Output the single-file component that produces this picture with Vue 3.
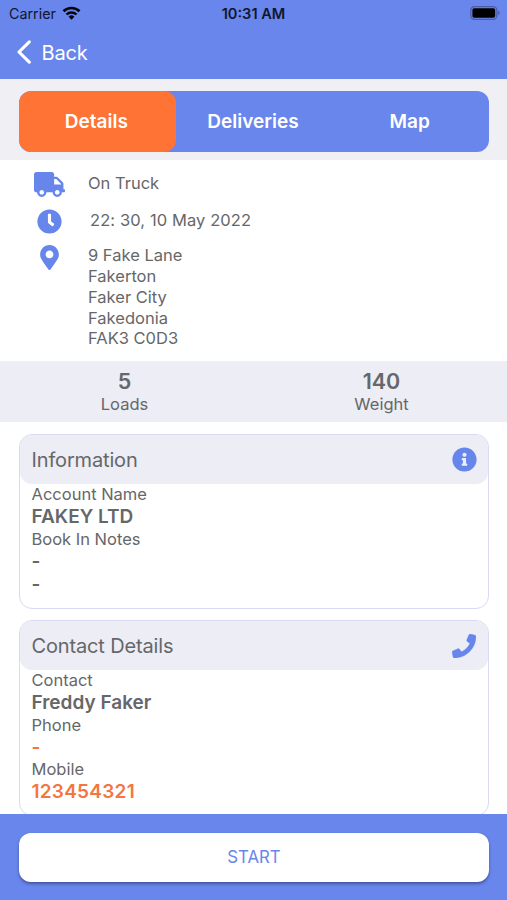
<script setup>
import { ref } from 'vue'

const tabs = ['Details', 'Deliveries', 'Map']
const active = ref('Details')
const address = ['9 Fake Lane', 'Fakerton', 'Faker City', 'Fakedonia', 'FAK3 C0D3']
const stats = [
  { value: '5', label: 'Loads' },
  { value: '140', label: 'Weight' },
]
</script>

<template>
  <div class="screen">
    <header class="header">
      <div class="status">
        <div class="carrier">
          <span>Carrier</span>
          <svg class="wifi" viewBox="0 0 18 14">
            <path d="M1 5.3a11.3 11.3 0 0 1 16 0" fill="none" stroke="#05070f" stroke-width="2.7" />
            <path d="M4 8.5a7.1 7.1 0 0 1 10 0" fill="none" stroke="#05070f" stroke-width="2.4" />
            <path d="M9 13.7l-2.9-3a4.2 4.2 0 0 1 5.8 0z" fill="#05070f" />
          </svg>
        </div>
        <span class="time">10:31 AM</span>
        <div class="power">
          <svg class="battery" viewBox="0 0 31 14">
            <rect x="0.8" y="0.7" width="26" height="12.6" rx="3.6" fill="none" stroke="#4a5ca6" stroke-width="1.2" />
            <rect x="2.4" y="2.3" width="22.8" height="9.4" rx="1.8" fill="#000" />
            <path d="M28.2 4.8c1.9.6 1.9 3.8 0 4.4z" fill="#4a5ca6" />
          </svg>
        </div>
      </div>
      <button class="back">
        <svg class="chevron" viewBox="0 0 14 24"><path d="M12.3 1.8L2 12l10.3 10.2" fill="none" stroke="#fff" stroke-width="3.1" stroke-linecap="round" stroke-linejoin="round" /></svg>
        <span>Back</span>
      </button>
    </header>

    <div class="tab-area">
      <nav class="tabs">
        <button v-for="t in tabs" :key="t" class="tab" :class="{ active: t === active }" @click="active = t">{{ t }}</button>
      </nav>
    </div>

    <section class="summary">
      <div class="line">
        <span class="icon-cell">
          <svg class="truck" viewBox="0 0 640 512"><path d="M624 352h-16V243.9c0-12.7-5.1-24.9-14.1-33.9L494 110.1c-9-9-21.2-14.1-33.9-14.1H416V48c0-26.5-21.5-48-48-48H48C21.5 0 0 21.5 0 48v320c0 26.5 21.5 48 48 48h16c0 53 43 96 96 96s96-43 96-96h128c0 53 43 96 96 96s96-43 96-96h48c8.8 0 16-7.2 16-16v-32c0-8.8-7.2-16-16-16zM160 464c-26.5 0-48-21.5-48-48s21.5-48 48-48 48 21.5 48 48-21.5 48-48 48zm320 0c-26.5 0-48-21.5-48-48s21.5-48 48-48 48 21.5 48 48-21.5 48-48 48zm80-208H416V144h44.1l99.9 99.9V256z" /></svg>
        </span>
        <span class="text">On Truck</span>
      </div>
      <div class="line when">
        <span class="icon-cell">
          <svg class="round" viewBox="0 0 512 512"><path d="M256,8C119,8,8,119,8,256S119,504,256,504,504,393,504,256,393,8,256,8Zm92.49,313h0l-20,25a16,16,0,0,1-22.49,2.5h0l-67-49.72a40,40,0,0,1-15-31.23V112a16,16,0,0,1,16-16h32a16,16,0,0,1,16,16V256l58,42.5A16,16,0,0,1,348.49,321Z" /></svg>
        </span>
        <span class="text">22: 30, 10 May 2022</span>
      </div>
      <div class="line place">
        <span class="icon-cell">
          <svg class="pin" viewBox="0 0 384 512"><path d="M172.268 501.67C26.97 291.031 0 269.413 0 192 0 85.961 85.961 0 192 0s192 85.961 192 192c0 77.413-26.97 99.031-172.268 309.67-9.535 13.774-29.93 13.773-39.464 0zM192 272c44.183 0 80-35.817 80-80s-35.817-80-80-80-80 35.817-80 80 35.817 80 80 80z" /></svg>
        </span>
        <div class="address">
          <div v-for="a in address" :key="a">{{ a }}</div>
        </div>
      </div>
    </section>

    <section class="stats">
      <div v-for="s in stats" :key="s.label" class="stat">
        <strong>{{ s.value }}</strong>
        <span>{{ s.label }}</span>
      </div>
    </section>

    <main class="cards">
      <article class="card info">
        <div class="card-head">
          <h2>Information</h2>
          <svg class="round" viewBox="0 0 512 512"><path d="M256 8C119.043 8 8 119.083 8 256c0 136.997 111.043 248 248 248s248-111.003 248-248C504 119.083 392.957 8 256 8zm0 110c23.196 0 42 18.804 42 42s-18.804 42-42 42-42-18.804-42-42 18.804-42 42-42zm56 254c0 6.627-5.373 12-12 12h-88c-6.627 0-12-5.373-12-12v-24c0-6.627 5.373-12 12-12h12v-64h-12c-6.627 0-12-5.373-12-12v-24c0-6.627 5.373-12 12-12h64c6.627 0 12 5.373 12 12v100h12c6.627 0 12 5.373 12 12v24z" /></svg>
        </div>
        <div class="card-body">
          <div class="label">Account Name</div>
          <div class="value">FAKEY LTD</div>
          <div class="label">Book In Notes</div>
          <div class="value">-</div>
          <div class="value extra">-</div>
        </div>
      </article>
      <article class="card contact">
        <div class="card-head">
          <h2>Contact Details</h2>
          <svg class="phone" viewBox="0 0 512 512"><path d="M493.4 24.6l-104-24c-11.3-2.6-22.9 3.3-27.5 13.9l-48 112c-4.2 9.8-1.4 21.3 6.9 28l60.6 49.6c-36 76.7-98.9 140.5-177.2 177.2l-49.6-60.6c-6.8-8.3-18.2-11.1-28-6.9l-112 48C3.9 366.5-2 378.1.6 389.4l24 104C27.1 504.2 36.7 512 48 512c256.1 0 464-207.5 464-464 0-11.2-7.7-20.9-18.6-23.4z" /></svg>
        </div>
        <div class="card-body">
          <div class="label">Contact</div>
          <div class="value">Freddy Faker</div>
          <div class="label">Phone</div>
          <div class="value link">-</div>
          <div class="label">Mobile</div>
          <div class="value link number">123454321</div>
        </div>
      </article>
    </main>

    <footer class="footer">
      <button class="start">START</button>
    </footer>
  </div>
</template>

<style>
body {
  margin: 0;
  background: #fff;
}
</style>

<style scoped>
.screen {
  width: 507px;
  height: 900px;
  display: flex;
  flex-direction: column;
  overflow: hidden;
  background: #fff;
  color: #666769;
  font-family: Inter, "Liberation Sans", sans-serif;
  font-size: 16.5px;
}
button {
  border: 0;
  padding: 0;
  background: none;
  font: inherit;
}
svg {
  display: block;
  flex: none;
  fill: #6786ec;
}
.header {
  flex: none;
  height: 79px;
  background: #6986ec;
}
.status {
  display: grid;
  grid-template-columns: 1fr auto 1fr;
  align-items: center;
  height: 27px;
  padding: 0 6px 0 9px;
  color: #10162e;
  font-size: 14.3px;
}
.carrier {
  display: flex;
  align-items: center;
  gap: 6px;
}
.wifi {
  width: 19px;
  height: 14px;
  margin-top: -1px;
}
.time {
  font-weight: 600;
  font-size: 14.6px;
  padding-right: 3px;
}
.power {
  display: flex;
  justify-content: flex-end;
}
.battery {
  width: 31px;
  height: 14px;
  margin-top: -1px;
}
.back {
  display: flex;
  align-items: center;
  gap: 10.5px;
  height: 51px;
  padding-left: 17px;
  color: #fff;
  font-size: 20px;
  letter-spacing: -0.2px;
}
.chevron {
  width: 14px;
  height: 24px;
  margin-top: -2px;
}
.tab-area {
  flex: none;
  height: 81px;
  box-sizing: border-box;
  padding: 12px 18px 8px 19px;
  background: #f0eff4;
}
.tabs {
  display: grid;
  grid-template-columns: repeat(3, 1fr);
  height: 61px;
  border-radius: 12px;
  background: #6986ec;
  overflow: hidden;
}
.tab {
  padding-right: 2px;
  color: #fff;
  font-size: 19px;
  font-weight: 600;
}
.tab.active {
  border-radius: 12px;
  background: #ff7334;
}
.summary {
  flex: none;
  height: 201px;
  box-sizing: border-box;
  padding-top: 5px;
}
.line {
  display: flex;
  align-items: center;
  height: 38px;
}
.icon-cell {
  width: 88px;
  padding-left: 11px;
  box-sizing: border-box;
  display: flex;
  justify-content: center;
}
.text {
  padding-bottom: 2px;
}
.truck {
  width: 31px;
  height: 25px;
}
.round {
  width: 25px;
  height: 25px;
}
.pin {
  width: 19px;
  height: 25px;
}
.when {
  height: 36px;
}
.when .text {
  padding-left: 2px;
  letter-spacing: 0.1px;
}
.place {
  align-items: flex-start;
  padding-top: 6px;
}
.address {
  padding-top: 0.4px;
  line-height: 20.75px;
}
.stats {
  flex: none;
  display: grid;
  grid-template-columns: 249px 1fr;
  height: 61px;
  background: #ecedf5;
}
.stat {
  display: flex;
  flex-direction: column;
  align-items: center;
  padding-top: 8px;
}
.stat + .stat {
  padding-left: 7px;
}
.stat strong {
  font-size: 21.5px;
  font-weight: 600;
  line-height: 24px;
}
.stat span {
  line-height: 23px;
}
.cards {
  flex: none;
  height: 392px;
  box-sizing: border-box;
  padding: 12px 18px 0 19px;
  overflow: hidden;
}
.card {
  box-sizing: border-box;
  border: 1px solid #d9d9f3;
  border-radius: 13px;
}
.info {
  height: 175px;
  margin-bottom: 11px;
}
.contact {
  height: 196px;
}
.card-head {
  display: flex;
  align-items: center;
  justify-content: space-between;
  height: 49px;
  padding: 0 11.5px;
  border-radius: 12px;
  background: #ecedf5;
}
h2 {
  margin: 0;
  font-size: 20px;
  font-weight: 400;
  letter-spacing: -0.15px;
}
.phone {
  width: 24px;
  height: 24px;
  margin-right: 0.5px;
  stroke: #6786ec;
  stroke-width: 8px;
}
.card-body {
  margin-top: -0.7px;
  padding-left: 11.5px;
}
.label {
  line-height: 22px;
}
.value {
  padding-top: 0.8px;
  line-height: 21.6px;
  font-size: 19px;
  font-weight: 600;
}
.value.extra {
  line-height: 24px;
}
.number {
  letter-spacing: 0.25px;
}
.link {
  color: #f5753f;
}
.footer {
  flex: none;
  height: 86px;
  box-sizing: border-box;
  padding: 19px 18px 0 19px;
  background: #6986ec;
}
.start {
  display: block;
  width: 100%;
  height: 49px;
  padding-bottom: 1px;
  border-radius: 12px;
  background: #fff;
  box-shadow: 0 2px 3px rgba(30, 40, 90, 0.5);
  color: #6986ec;
  font-size: 16.8px;
}
</style>
